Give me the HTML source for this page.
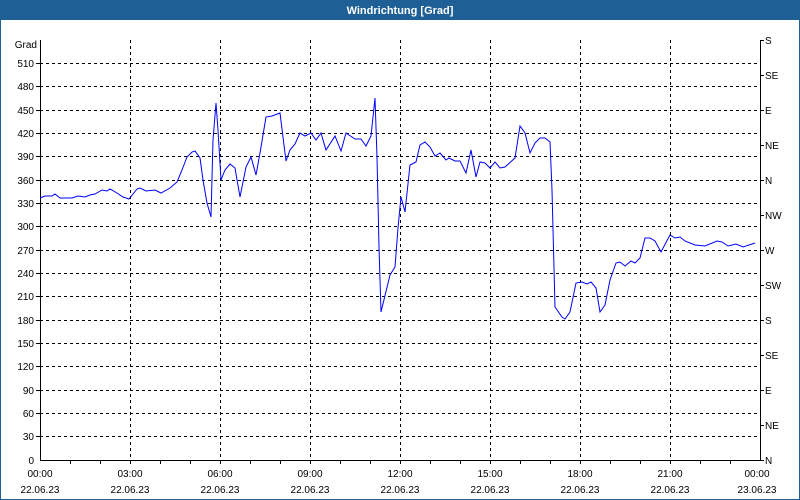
<!DOCTYPE html>
<html><head><meta charset="utf-8"><style>
html,body{margin:0;padding:0;background:#fff;}
svg{display:block;font-family:"Liberation Sans","DejaVu Sans",sans-serif;}
</style></head><body>
<svg width="800" height="500" viewBox="0 0 800 500" xmlns="http://www.w3.org/2000/svg">
<rect x="0" y="0" width="800" height="500" fill="#1e6096"/>
<rect x="1" y="20" width="798" height="479" fill="#fff"/>
<text x="400" y="14" fill="#fff" font-size="11" font-weight="bold" text-anchor="middle">Windrichtung [Grad]</text>
<g stroke="#000" stroke-width="1" stroke-dasharray="3,3" fill="none" shape-rendering="crispEdges">
<path d="M40 63.5H760M40 86.5H760M40 110.5H760M40 133.5H760M40 156.5H760M40 180.5H760M40 203.5H760M40 226.5H760M40 250.5H760M40 273.5H760M40 296.5H760M40 320.5H760M40 343.5H760M40 366.5H760M40 390.5H760M40 413.5H760M40 436.5H760"/>
<path d="M130.5 40V460M220.5 40V460M310.5 40V460M400.5 40V460M490.5 40V460M580.5 40V460M670.5 40V460"/>
</g>
<g stroke="#000" stroke-width="1" fill="none" shape-rendering="crispEdges">
<path d="M40.5 40V460.5H760.5V40"/>
<path d="M70.5 460v4M100.5 460v4M130.5 460v4M160.5 460v4M190.5 460v4M220.5 460v4M250.5 460v4M280.5 460v4M310.5 460v4M340.5 460v4M370.5 460v4M400.5 460v4M430.5 460v4M460.5 460v4M490.5 460v4M520.5 460v4M550.5 460v4M580.5 460v4M610.5 460v4M640.5 460v4M670.5 460v4M700.5 460v4M730.5 460v4"/>
<path d="M36 63.5h4M36 86.5h4M36 110.5h4M36 133.5h4M36 156.5h4M36 180.5h4M36 203.5h4M36 226.5h4M36 250.5h4M36 273.5h4M36 296.5h4M36 320.5h4M36 343.5h4M36 366.5h4M36 390.5h4M36 413.5h4M36 436.5h4"/>
<path d="M760 40.5h4M760 75.5h4M760 110.5h4M760 145.5h4M760 180.5h4M760 215.5h4M760 250.5h4M760 285.5h4M760 320.5h4M760 355.5h4M760 390.5h4M760 425.5h4M760 460.5h4"/>
</g>
<g font-size="10" fill="#000" text-anchor="end">
<text x="37" y="48">Grad</text>
<text x="34" y="67">510</text><text x="34" y="90">480</text><text x="34" y="114">450</text><text x="34" y="137">420</text><text x="34" y="160">390</text><text x="34" y="184">360</text><text x="34" y="207">330</text><text x="34" y="230">300</text><text x="34" y="254">270</text><text x="34" y="277">240</text><text x="34" y="300">210</text><text x="34" y="324">180</text><text x="34" y="347">150</text><text x="34" y="370">120</text><text x="34" y="394">90</text><text x="34" y="417">60</text><text x="34" y="440">30</text><text x="34" y="464">0</text>
</g>
<g font-size="10" fill="#000">
<text x="765" y="44">S</text><text x="765" y="79">SE</text><text x="765" y="114">E</text><text x="765" y="149">NE</text><text x="765" y="184">N</text><text x="765" y="219">NW</text><text x="765" y="254">W</text><text x="765" y="289">SW</text><text x="765" y="324">S</text><text x="765" y="359">SE</text><text x="765" y="394">E</text><text x="765" y="429">NE</text><text x="765" y="464">N</text>
</g>
<g font-size="10" fill="#000" text-anchor="middle">
<text x="40" y="477">00:00</text><text x="130" y="477">03:00</text><text x="220" y="477">06:00</text><text x="310" y="477">09:00</text><text x="400" y="477">12:00</text><text x="490" y="477">15:00</text><text x="580" y="477">18:00</text><text x="670" y="477">21:00</text><text x="757" y="477">00:00</text>
<text x="40" y="493">22.06.23</text><text x="130" y="493">22.06.23</text><text x="220" y="493">22.06.23</text><text x="310" y="493">22.06.23</text><text x="400" y="493">22.06.23</text><text x="490" y="493">22.06.23</text><text x="580" y="493">22.06.23</text><text x="670" y="493">22.06.23</text><text x="757" y="493">23.06.23</text>
</g>
<polyline fill="none" stroke="#0000ff" stroke-width="1" points="40,198 45,196 52,196 55,194 60,198 72,198 78,196 85,197 90,195 95,194 102,190 107,191 110,189 117,193 123,197 129,199 137,189 140,188 146,191 155,190 161,193 170,188 177,182 182,170 187,157 192,152 195,151 200,158 203,180 207,203 211,217 213,140 216,103 218,130 221,180 225,170 230,164 235,168 240,197 246,167 251,157 256,175 260,153 266,117 272,116 280,113 286,161 290,150 295,144 300,133 305,136 311,133 316,140 321,133 326,150 335,136 341,151 346,133 355,139 361,139 366,146 371,136 375,98 377,157 379,247 381,312 390,275 395,267 398,228 401,197 405,212 410,165 416,162 420,145 425,142 430,147 435,156 440,153 446,160 449,158 455,161 460,161 466,173 471,150 476,177 480,162 485,163 490,168 495,162 500,168 505,167 515,158 520,126 525,133 530,153 535,143 540,138 545,138 550,142 552,190 555,307 562,317 565,319 570,312 576,283 582,282 587,284 591,282 596,288 600,312 605,305 610,280 616,263 620,262 625,266 631,261 635,263 640,258 645,238 650,238 655,241 661,252 670,235 675,238 680,237 685,241 695,245 705,246 717,241 722,242 728,246 736,244 743,247 755,243"/>
</svg>
</body></html>
